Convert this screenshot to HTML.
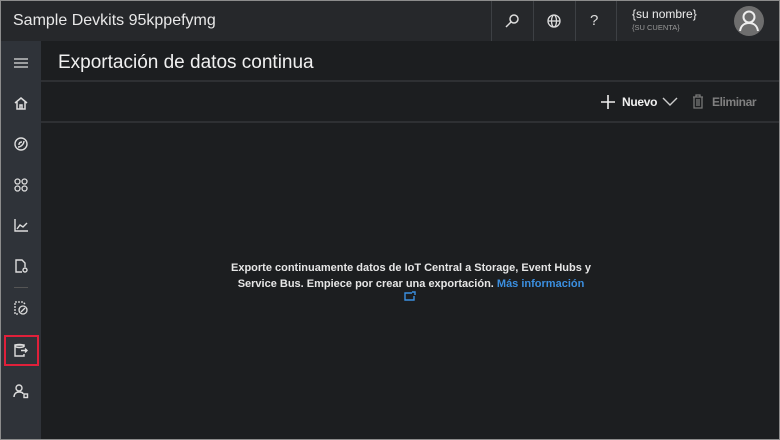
<!DOCTYPE html>
<html><head><meta charset="utf-8"><style>
*{margin:0;padding:0;box-sizing:border-box}
body{width:780px;height:440px;overflow:hidden;background:#8c8c8c;font-family:"Liberation Sans",sans-serif;position:relative}
.frame{position:absolute;left:1px;top:1px;width:778px;height:438px;background:#1c1e20;overflow:hidden}
.top{position:absolute;left:0;top:0;width:778px;height:40px;background:#26282b}
.brand{position:absolute;left:12px;top:11px;color:#e8e8e8;font-size:16px}
.sep{position:absolute;top:0;width:1px;height:40px;background:#3d4044}
.side{position:absolute;left:0;top:40px;width:40px;height:398px;background:#2f3339}
.title{position:absolute;left:57px;top:51px;color:#f0f0f0;font-size:19px}
.hl{position:absolute;left:40px;width:738px;height:2px;background:#2e3033}
.msg{position:absolute;left:210px;top:259px;width:400px;text-align:center;color:#e6e6e6;font-size:11px;font-weight:bold;line-height:16px}
svg{position:absolute}
</style></head><body><div class="frame">
<div class="top">
<div class="brand">Sample Devkits 95kppefymg</div>
<div class="sep" style="left:490px"></div><div class="sep" style="left:532px"></div><div class="sep" style="left:574px"></div><div class="sep" style="left:615px"></div>
<svg style="left:503px;top:12px" width="16" height="16" viewBox="0 0 16 16" fill="none" stroke="#ddd" stroke-width="1.5"><circle cx="10" cy="6" r="4"/><path d="M7 9l-5 5"/></svg>
<svg style="left:545px;top:12px" width="16" height="16" viewBox="0 0 16 16" fill="none" stroke="#ddd" stroke-width="1.3"><circle cx="8" cy="8" r="6"/><ellipse cx="8" cy="8" rx="2.5" ry="6"/><path d="M2 8h12"/></svg>
<div style="position:absolute;left:589px;top:11px;color:#ddd;font-size:15px">?</div>
<div style="position:absolute;left:631px;top:6px;color:#eee;font-size:12px">{su nombre}</div>
<div style="position:absolute;left:631px;top:22px;color:#999;font-size:7.5px">{SU CUENTA}</div>
<svg style="left:733px;top:5px" width="30" height="30" viewBox="0 0 30 30"><circle cx="15" cy="15" r="15" fill="#6e6e6e"/><circle cx="15" cy="11" r="5.5" fill="none" stroke="#eee" stroke-width="2"/><path d="M6 25c1-6 5-8 9-8s8 2 9 8" fill="none" stroke="#eee" stroke-width="2"/></svg>
</div>
<div class="side">
<svg style="left:12px;top:16px" width="16" height="12" viewBox="0 0 16 12" stroke="#ddd" stroke-width="1.3"><path d="M1 2h14M1 6h14M1 10h14"/></svg>
<svg style="left:12px;top:54px" width="16" height="16" viewBox="0 0 16 16" fill="none" stroke="#ddd" stroke-width="1.5"><path d="M2 8l6-5 6 5M4 7v7h8V7M7 14v-4h2v4"/></svg>
<svg style="left:12px;top:95px" width="16" height="16" viewBox="0 0 16 16" fill="none" stroke="#ddd" stroke-width="1.4"><circle cx="8" cy="8" r="6"/><path d="M5 11c3 0 6-3 6-6M6 9c0-2 1-3 3-3"/></svg>
<svg style="left:12px;top:136px" width="16" height="16" viewBox="0 0 16 16" fill="none" stroke="#ddd" stroke-width="1.3"><circle cx="4.5" cy="4.5" r="2.5"/><circle cx="11.5" cy="4.5" r="2.5"/><circle cx="4.5" cy="11.5" r="2.5"/><circle cx="11.5" cy="11.5" r="2.5"/></svg>
<svg style="left:12px;top:176px" width="16" height="16" viewBox="0 0 16 16" fill="none" stroke="#ddd" stroke-width="1.4"><path d="M2 2v12h13M4 12l3-4 3 2 4-4"/></svg>
<svg style="left:12px;top:217px" width="16" height="16" viewBox="0 0 16 16" fill="none" stroke="#ddd" stroke-width="1.4"><path d="M9 14H3V2h6l3 3v4"/><circle cx="12" cy="12" r="2"/></svg>
<div style="position:absolute;left:13px;top:246px;width:14px;height:1px;background:#555"></div>
<svg style="left:12px;top:259px" width="16" height="16" viewBox="0 0 16 16" fill="none" stroke="#ddd" stroke-width="1.3"><path d="M5 14H2V2h8l2 2" stroke-dasharray="2 1"/><circle cx="10" cy="10" r="4"/><path d="M8 12l4-4"/></svg>
<div style="position:absolute;left:3px;top:294px;width:35px;height:31px;border:2px solid #e0203a"></div>
<svg style="left:12px;top:301px" width="16" height="16" viewBox="0 0 16 16" fill="none" stroke="#ddd" stroke-width="1.4"><path d="M11 5V3H2v11h9v-2"/><ellipse cx="6.5" cy="4" rx="4.5" ry="1.5"/><path d="M8 8.5h6M12 6.5l2 2-2 2"/></svg>
<svg style="left:12px;top:342px" width="16" height="16" viewBox="0 0 16 16" fill="none" stroke="#ddd" stroke-width="1.4"><circle cx="6" cy="5" r="3"/><path d="M1 14c0-3 2-5 5-5s4 1 4 2"/><rect x="11" y="11" width="3.5" height="3.5"/></svg>
</div>
<div class="title">Exportación de datos continua</div>
<div class="hl" style="top:79px"></div>
<div class="hl" style="top:120px"></div>
<svg style="left:599px;top:93px" width="16" height="16" viewBox="0 0 16 16" stroke="#eee" stroke-width="1.6"><path d="M8 1v14M1 8h14"/></svg>
<div style="position:absolute;left:621px;top:94px;color:#f0f0f0;font-size:12px;font-weight:bold;letter-spacing:-0.3px">Nuevo</div>
<svg style="left:661px;top:96px" width="16" height="10" viewBox="0 0 16 10" fill="none" stroke="#ccc" stroke-width="1.4"><path d="M1 1l7 7 7-7"/></svg>
<svg style="left:691px;top:93px" width="12" height="15" viewBox="0 0 12 15" fill="none" stroke="#777" stroke-width="1.3"><path d="M1 3h10M4 3V1h4v2M2 3v11h8V3M5 5v7M7 5v7"/></svg>
<div style="position:absolute;left:711px;top:94px;color:#808080;font-size:12px;font-weight:bold;letter-spacing:-0.4px">Eliminar</div>
<div class="msg">Exporte continuamente datos de IoT Central a Storage, Event Hubs y Service Bus. Empiece por crear una exportación. <span style="color:#3b8fe0">Más información</span></div>
<svg style="left:403px;top:290px" width="12" height="10" viewBox="0 0 12 10" fill="none" stroke="#3b8fe0" stroke-width="1.4"><path d="M8 2H1v7h9V5M8 1h3v3"/></svg>
</div></body></html>
